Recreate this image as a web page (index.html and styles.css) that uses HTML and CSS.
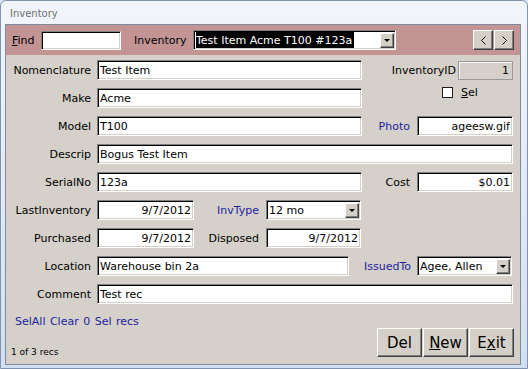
FILE: index.html
```html
<!DOCTYPE html>
<html lang="en">
<head>
    <title>Inventory</title>
    <meta charset="UTF-8">
    <link rel="stylesheet" href="styles.css">
</head>
<body>
    <div class="window">
        <div class="titlebar">Inventory</div>

        <div class="form">
            <div class="header">
                <label class="find-lbl"><u>F</u>ind</label>
                <input class="field find" type="text">
                <label class="hdr-lbl">Inventory</label>
                <div class="combo wide">
                    <span class="combo-text"><span class="picked">Test Item Acme T100 #123a</span></span>
                    <span class="raised drop"></span>
                </div>
                <div class="nav">
                    <button class="raised nav-btn"><svg width="5" height="9" viewBox="0 0 5 9"><polyline points="4.5,0.5 0.5,4.5 4.5,8.5" fill="none" stroke="#000" stroke-width="1"/></svg></button>
                    <button class="raised nav-btn"><svg width="5" height="9" viewBox="0 0 5 9"><polyline points="0.5,0.5 4.5,4.5 0.5,8.5" fill="none" stroke="#000" stroke-width="1"/></svg></button>
                </div>
            </div>

            <div class="rows">
                <div class="row">
                    <label class="lbl">Nomenclature</label>
                    <input class="field w-main" type="text" value="Test Item">
                    <label class="rlbl w-id">InventoryID</label>
                    <div class="idbox">1</div>
                </div>
                <div class="row">
                    <label class="lbl">Make</label>
                    <input class="field w-main" type="text" value="Acme">
                    <div class="check">
                        <span class="box"></span>
                        <label><u>S</u>el</label>
                    </div>
                </div>
                <div class="row">
                    <label class="lbl">Model</label>
                    <input class="field w-main" type="text" value="T100">
                    <label class="rlbl w-side link">Photo</label>
                    <input class="field w-small num" type="text" value="ageesw.gif">
                </div>
                <div class="row">
                    <label class="lbl">Descrip</label>
                    <input class="field w-full" type="text" value="Bogus Test Item">
                </div>
                <div class="row">
                    <label class="lbl">SerialNo</label>
                    <input class="field w-main" type="text" value="123a">
                    <label class="rlbl w-side">Cost</label>
                    <input class="field w-small num" type="text" value="$0.01">
                </div>
                <div class="row">
                    <label class="lbl">LastInventory</label>
                    <input class="field w-date num" type="text" value="9/7/2012">
                    <label class="rlbl w-mid link">InvType</label>
                    <div class="combo w-combo">
                        <span class="combo-text">12 mo</span>
                        <span class="raised drop"></span>
                    </div>
                </div>
                <div class="row">
                    <label class="lbl">Purchased</label>
                    <input class="field w-date num" type="text" value="9/7/2012">
                    <label class="rlbl w-mid">Disposed</label>
                    <input class="field w-combo num" type="text" value="9/7/2012">
                </div>
                <div class="row">
                    <label class="lbl">Location</label>
                    <input class="field w-loc" type="text" value="Warehouse bin 2a">
                    <label class="rlbl w-issued link">IssuedTo</label>
                    <div class="combo w-combo">
                        <span class="combo-text">Agee, Allen</span>
                        <span class="raised drop"></span>
                    </div>
                </div>
                <div class="row">
                    <label class="lbl">Comment</label>
                    <input class="field w-full" type="text" value="Test rec">
                </div>
            </div>

            <div class="links">SelAll Clear 0 Sel recs</div>

            <div class="footer">
                <span class="count">1 of 3 recs</span>
                <div class="actions">
                    <button class="raised act">Del</button>
                    <button class="raised act"><u>N</u>ew</button>
                    <button class="raised act">E<u>x</u>it</button>
                </div>
            </div>
        </div>
    </div>
</body>
</html>
```

FILE: styles.css
```css
* {
    margin: 0;
    padding: 0;
    box-sizing: border-box;
}

body {
    font-family: "DejaVu Sans", sans-serif;
    font-size: 11px;
    color: #000;
    background-color: #dde7f3;
}

.window {
    width: 528px;
    height: 369px;
    border: 1px solid #8094b2;
    border-radius: 6px 6px 0 0;
    background: linear-gradient(#f2f6fb, #d2dff0);
    padding: 0 6px 3px 4px;
}

.titlebar {
    height: 23px;
    padding: 3px 0 0 5px;
    font-size: 10px;
    line-height: 20px;
    color: #6f6f6f;
}

.form {
    height: 341px;
    border: 1px solid #7f8b9c;
    background-color: #d5d0c9;
    display: flex;
    flex-direction: column;
}

/* sunken white box */
.field,
.combo {
    height: 20px;
    background-color: #fff;
    border: 1px solid;
    border-color: #808080 #fff #fff #808080;
    box-shadow: inset 1px 1px 0 #000, inset -1px -1px 0 #d4d0c8;
}

.field {
    font: inherit;
    color: #000;
    padding: 0 2px;
    outline: none;
}

.num {
    text-align: right;
}

.raised {
    background-color: #d4d0c8;
    border: 1px solid;
    border-color: #fff #404040 #404040 #fff;
    box-shadow: inset -1px -1px 0 #808080;
    font: inherit;
    color: #000;
}

.header {
    height: 30px;
    background-color: #c29494;
    display: flex;
    align-items: center;
    padding: 0 6px;
}

.find-lbl {
    width: 29px;
}

.find {
    width: 80px;
    height: 19px;
}

.hdr-lbl {
    width: 59px;
    margin-left: 13px;
}

.combo {
    display: flex;
    align-items: center;
    padding: 1px 1px 1px 2px;
}

.combo.wide {
    width: 203px;
}

.combo-text {
    flex: 1;
    height: 100%;
    display: flex;
    align-items: center;
    white-space: nowrap;
    overflow: hidden;
}

.picked {
    height: 100%;
    display: flex;
    align-items: center;
    background-color: #000;
    color: #fff;
    padding: 0 2px 0 0;
}

.drop {
    width: 14px;
    height: 15px;
    display: flex;
    align-items: center;
    justify-content: center;
}

.drop::after {
    content: "";
    border-left: 3px solid transparent;
    border-right: 3px solid transparent;
    border-top: 3px solid #000;
    margin-right: 1px;
}

.nav {
    margin-left: auto;
    display: flex;
    gap: 1px;
}

.nav-btn {
    width: 20px;
    height: 20px;
    display: flex;
    align-items: center;
    justify-content: center;
}

.rows {
    padding-top: 5px;
    display: flex;
    flex-direction: column;
    gap: 8px;
}

.row {
    height: 20px;
    display: flex;
    align-items: center;
}

.lbl {
    width: 85px;
    margin-right: 6px;
    text-align: right;
    white-space: nowrap;
}

.rlbl {
    text-align: right;
    white-space: nowrap;
}

.link {
    color: #2323a0;
}

.w-main { width: 265px; }
.w-full { width: 416px; }
.w-date { width: 97px; }
.w-loc { width: 252px; }
.w-small { width: 96px; }
.w-combo { width: 95px; }

.w-id { width: 96px; padding-right: 2px; }
.w-side { width: 55px; padding-right: 7px; }
.w-mid { width: 72px; padding-right: 7px; }
.w-issued { width: 68px; padding-right: 6px; }

.idbox {
    width: 55px;
    height: 19px;
    border: 1px solid #9a9a9a;
    box-shadow: inset 1px 1px 0 #f4f4f4;
    text-align: right;
    line-height: 17px;
    padding-right: 3px;
}

.check {
    align-self: flex-start;
    margin: -1px 0 0 80px;
    height: 11px;
    display: flex;
    align-items: center;
    line-height: 11px;
}

.box {
    width: 11px;
    height: 11px;
    background-color: #fff;
    border: 1px solid #1c1c1c;
    margin-right: 8px;
}

.links {
    margin: 11px 0 0 9px;
    line-height: 13px;
    color: #2323a0;
    word-spacing: 1px;
}

.footer {
    display: flex;
    justify-content: space-between;
    align-items: flex-end;
    padding: 0 6px 0 5px;
}

.count {
    font-size: 9px;
    line-height: 11px;
    margin-bottom: -1px;
}

.actions {
    display: flex;
    gap: 1px;
}

.act {
    width: 45px;
    height: 29px;
    font-size: 15px;
}
```
